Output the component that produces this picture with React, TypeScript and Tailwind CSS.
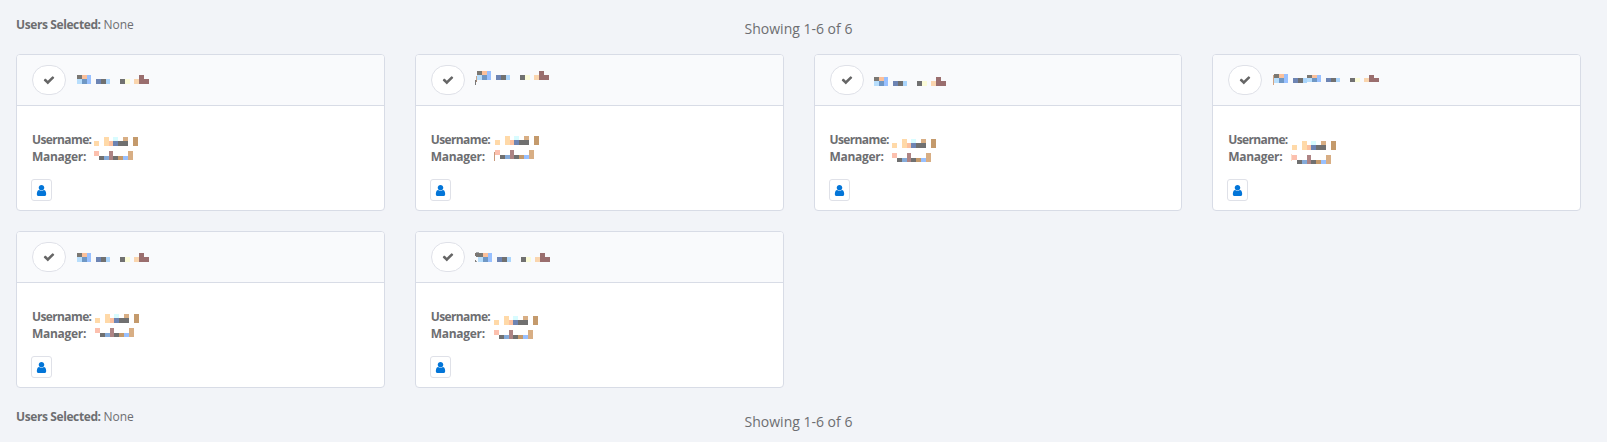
import React from "react";

type Cell = [x: number, y: number, w: number, h: number, fill: string];
type Point = [x: number, y: number];

const GREY = "#707070";

const nameCells: Cell[] = [
  [0, 0, 5, 4, "#7a7772"], [5, 0, 5, 4, "#fcc09a"], [10, 0, 4, 9, "#98c0ff"],
  [0, 4, 5, 5, "#b8defc"], [5, 4, 5, 5, "#6f97c4"],
  [19, 4, 5, 5, "#6d84b3"], [24, 4, 5, 5, GREY], [29, 4, 4, 5, "#aad5fc"],
  [43, 4, 5, 5, GREY], [48, 4, 5, 5, "#fbfbd8"], [57, 4, 5, 5, "#fad5ae"],
  [62, 0, 5, 9, "#9a6e6e"], [67, 4, 5, 5, "#9a6e6e"],
];

const longNameCells: Cell[] = [
  ...nameCells.slice(0, 8),
  [33, 1, 5, 3, "#7a7772"], [38, 1, 5, 3, "#fcc09a"], [43, 1, 4, 7, "#98c0ff"],
  [33, 4, 5, 4, "#b8defc"], [38, 4, 5, 4, "#6f97c4"],
  [52, 4, 5, 4, "#6d84b3"], [57, 4, 5, 4, GREY], [62, 4, 4, 4, "#aad5fc"],
  [76, 4, 5, 4, GREY], [81, 4, 5, 4, "#fbfbd8"], [90, 4, 5, 4, "#fad5ae"],
  [95, 1, 5, 7, "#9a6e6e"], [100, 4, 5, 4, "#9a6e6e"],
];

const usernameCells: Cell[] = [
  [0, 4, 5, 5, "#ffd9a8"], [10, 0, 5, 9, "#ffd9a8"], [15, 4, 4, 5, "#fcc09f"],
  [19, 0, 5, 4, "#d8fcff"], [19, 4, 5, 5, "#6d84b3"], [24, 4, 10, 5, GREY],
  [29, 0, 5, 4, "#d8ae84"], [39, 0, 5, 9, "#c49a6c"],
];

const managerCells: Cell[] = [
  [0, 0, 5, 5, "#fcc0ae"], [5, 5, 5, 4, GREY], [10, 5, 5, 4, "#84aad8"],
  [15, 0, 4, 9, "#ae8484"], [19, 5, 5, 4, GREY], [24, 5, 5, 4, "#c49a6c"],
  [29, 5, 5, 4, "#98c0ff"], [34, 0, 5, 9, "#d8ae84"],
];

function Mosaic({ cells, at, className }: { cells: Cell[]; at: Point; className: string }) {
  return (
    <svg className={className} shapeRendering="crispEdges" aria-hidden="true">
      <g transform={`translate(${at[0]} ${at[1]})`}>
        {cells.map(([x, y, w, h, fill], i) => (
          <rect key={i} x={x} y={y} width={w} height={h} fill={fill} />
        ))}
      </g>
    </svg>
  );
}

interface User {
  name: Cell[];
  nameAt: Point;
  usernameAt: Point;
  managerAt: Point;
  manager?: Cell[];
}

const users: User[] = [
  { name: nameCells, nameAt: [5, 10], usernameAt: [2, 6], managerAt: [2, 3] },
  {
    name: [[-1, 5, 1, 4, "#c9a58c"], [-2, 9, 1, 5, "#777777"], [-1, 9, 1, 2, "#a98a78"], ...nameCells],
    nameAt: [6, 6],
    usernameAt: [4, 5],
    managerAt: [4, 2],
    manager: [[-1, 2, 1, 9, "#c79a7c"], ...managerCells],
  },
  { name: nameCells, nameAt: [4, 12], usernameAt: [2, 8], managerAt: [2, 5] },
  {
    name: [[-1, 1, 1, 10, "#d2a483"], ...longNameCells],
    nameAt: [6, 9],
    usernameAt: [4, 10],
    managerAt: [4, 7],
    manager: [[-1, -1, 1, 7, "#fbdcc8"], ...managerCells],
  },
  { name: nameCells, nameAt: [5, 11], usernameAt: [3, 6], managerAt: [3, 3] },
  {
    name: [
      [-3, 0, 1, 3, "#80756c"], [-2, -1, 3, 1, "#a3a5a7"], [-2, 3, 2, 1, "#777777"],
      [-2, 0, 2, 4, "#777777"], [-3, 7, 1, 2, "#85807b"], [-2, 8, 1, 1, "#9a9c9f"], ...nameCells,
    ],
    nameAt: [7, 11],
    usernameAt: [3, 8],
    managerAt: [3, 5],
  },
];

function CheckIcon() {
  return (
    <svg viewBox="0 0 1792 1792" className="size-3 fill-[#666]">
      <path d="M1671 566q0 40-28 68l-724 724-136 136q-28 28-68 28t-68-28l-136-136-362-362q-28-28-28-68t28-68l136-136q28-28 68-28t68 28l294 295 656-657q28-28 68-28t68 28l136 136q28 28 28 68z" />
    </svg>
  );
}

function UserIcon() {
  return (
    <svg viewBox="0 0 1792 1792" className="size-[13px] fill-[#0275d8]">
      <path d="M1536 1399q0 109-62.5 187t-150.5 78h-854q-88 0-150.5-78t-62.5-187q0-85 8.5-160.5t31.5-152 58.5-131 94-89 134.5-34.5q131 128 313 128t313-128q76 0 134.5 34.5t94 89 58.5 131 31.5 152 8.5 160.5zm-256-887q0 159-112.5 271.5t-271.5 112.5-271.5-112.5-112.5-271.5 112.5-271.5 271.5-112.5 271.5 112.5 112.5 271.5z" />
    </svg>
  );
}

function UserCard({ user }: { user: User }) {
  return (
    <article className="h-[157px] overflow-hidden rounded-[4px] border border-[#d8dce6] bg-white">
      <header className="flex h-[51px] items-start border-b border-[#d8dce6] bg-[#f9fafc] pt-[10px] pl-[15px]">
        <button aria-label="Select" className="flex h-[30px] w-[34px] items-center justify-center rounded-[16px] border border-[#dfe1e8] bg-white">
          <CheckIcon />
        </button>
        <Mosaic cells={user.name} at={user.nameAt} className="ml-[6px] h-[30px] w-[130px]" />
      </header>
      <div className="pt-[25px] pl-[15px] text-[12px] leading-[17px] font-bold">
        <div className="flex">
          <span className="w-[60px] tracking-[-0.62px] whitespace-nowrap">Username:</span>
          <Mosaic cells={usernameCells} at={user.usernameAt} className="h-[17px] w-[60px] overflow-visible" />
        </div>
        <div className="flex">
          <span className="w-[60px] tracking-[-0.3px] whitespace-nowrap">Manager:</span>
          <Mosaic cells={user.manager ?? managerCells} at={user.managerAt} className="h-[17px] w-[60px] overflow-visible" />
        </div>
        <button aria-label="Profile" className="mt-[14px] -ml-px flex h-[22px] w-[21px] items-center justify-center rounded-[3px] border border-[#dfe1e8] bg-white">
          <UserIcon />
        </button>
      </div>
    </article>
  );
}

function Summary({ className }: { className: string }) {
  return (
    <div className={`grid h-6 grid-cols-3 ${className}`}>
      <p className="text-[12px] leading-[18px] tracking-[-0.1px]">
        <strong className="tracking-[-0.4px]">Users Selected:</strong> None
      </p>
      <p className="text-center text-[14px] leading-[20px]">Showing 1-6 of 6</p>
    </div>
  );
}

export default function App() {
  return (
    <main className="h-[442px] overflow-hidden bg-[#f2f4f8] pt-4 pr-[26px] pl-4 font-['Open_Sans','Noto_Sans',sans-serif] text-[#6d6e71]">
      <Summary className="[&>p:last-child]:pt-[3px]" />
      <section className="mt-[14px] mb-5 grid grid-cols-4 gap-x-[30px] gap-y-5">
        {users.map((user, i) => (
          <UserCard key={i} user={user} />
        ))}
      </section>
      <Summary className="[&>p:last-child]:pt-1" />
    </main>
  );
}
